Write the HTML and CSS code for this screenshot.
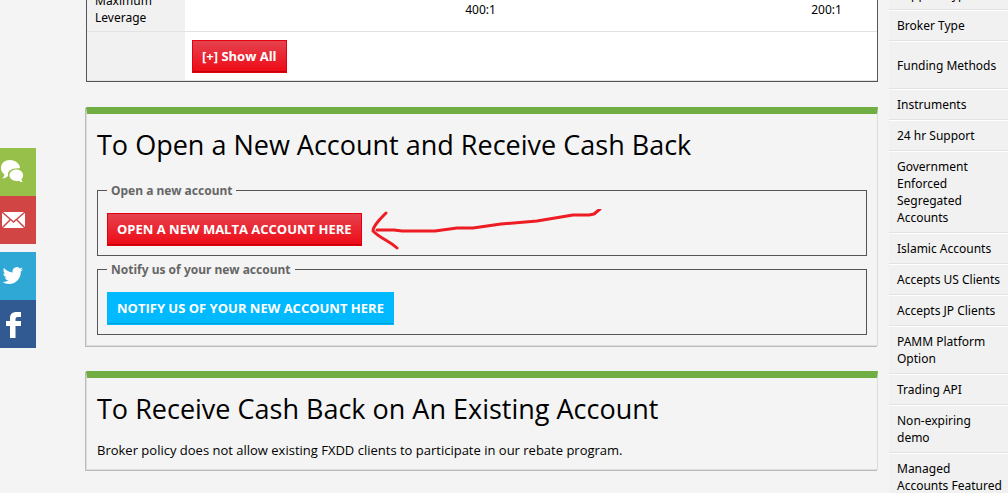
FILE: index.html
```
<!DOCTYPE html>
<html lang="en">
<head>
  <meta charset="UTF-8">
  <meta name="viewport" content="width=device-width, initial-scale=1.0">
  <title>FXDD Cash Back</title>
  <link rel="stylesheet" href="styles.css">
</head>
<body>
  <div class="page">
    <nav class="social">
      <a class="chat" href="#" aria-label="Chat">
        <svg width="24" height="24" viewBox="0 0 24 24"><path fill="#fff" d="M10 0C4.800 0 1 3.400 1 8c0 2.700 1.300 4.900 3.300 6.300.2 1.600-.8 3-2.200 4.200 2.500 0 4.600-.9 6-2.700C7 11 12 7.500 20 8.300 20 3.700 15.500 0 10 0z"/><path fill="#fff" d="M16.500 9.500c-4 0-7 2.500-7 5.800s3 5.700 7 5.700c.8 0 1.500-.1 2.200-.3 1.100 1 2.500 1.500 4.300 1.300-1-.7-1.500-1.700-1.500-2.800 1-1 1.600-2.300 1.600-3.900 0-3.300-2.900-5.800-6.600-5.800z"/></svg>
      </a>
      <a class="mail" href="#" aria-label="Email">
        <svg width="26" height="24" viewBox="0 0 26 24"><path fill="#fff" d="M2 4h23v16H2z"/><path fill="none" stroke="#d14545" stroke-width="1.500" d="M2 4l11.500 10L25 4M2 20l8.500-8.500M25 20l-8.500-8.500"/></svg>
      </a>
      <a class="twitter" href="#" aria-label="Twitter">
        <svg width="24" height="24" viewBox="0 0 24 24"><path fill="#fff" d="M23 5.200c-.7.300-1.500.6-2.400.7.900-.5 1.500-1.300 1.800-2.300-.8.500-1.700.8-2.600 1A4.200 4.200 0 0 0 12.600 8.400C9.200 8.200 6.100 6.600 4 4.100c-1.100 1.900-.6 4.300 1.300 5.600-.7 0-1.300-.2-1.900-.5 0 2 1.400 3.700 3.300 4.100-.6.200-1.200.2-1.900.1.500 1.600 2 2.800 3.900 2.900A8.400 8.400 0 0 1 2.500 18c1.900 1.200 4.100 1.900 6.400 1.900 7.800 0 12.200-6.600 11.900-12.500.9-.6 1.600-1.300 2.200-2.200z"/></svg>
      </a>
      <a class="facebook" href="#" aria-label="Facebook">
        <svg width="24" height="28" viewBox="0 0 24 28"><path fill="#fff" d="M10 28V16H6v-5h4V8C10 4 12.500 2 16.500 2H21v5h-3c-1.600 0-2.500.7-2.500 2.200V11H21v5h-5.500v12z"/></svg>
      </a>
    </nav>

    <main class="content">
      <table class="details">
        <tr>
          <th scope="row">Maximum Leverage</th>
          <td>400:1</td>
          <td class="narrow">200:1</td>
        </tr>
        <tr>
          <th></th>
          <td class="show" colspan="2"><button type="button" class="btn red">[+] Show All</button></td>
        </tr>
      </table>

      <section class="panel">
        <h2>To Open a New Account and Receive Cash Back</h2>
        <fieldset>
          <legend>Open a new account</legend>
          <a class="btn red" href="#">OPEN A NEW MALTA ACCOUNT HERE</a>
          <!-- hand drawn arrow pointing at the button -->
          <svg class="arrow" width="240" height="50" viewBox="0 0 240 50"><path d="M9 21h17l8 1h33l22-3h16l28-4 36-3 36-6h16l5-1 6-5M18 4C12 10 5 17 5 22c8 8 15 9 24 17"/></svg>
        </fieldset>
        <fieldset>
          <legend>Notify us of your new account</legend>
          <a class="btn blue" href="#">NOTIFY US OF YOUR NEW ACCOUNT HERE</a>
        </fieldset>
      </section>

      <section class="panel">
        <h2>To Receive Cash Back on An Existing Account</h2>
        <p>Broker policy does not allow existing FXDD clients to participate in our rebate program.</p>
      </section>
    </main>

    <ul class="features">
      <li>Support Type</li>
      <li>Broker Type</li>
      <li class="tall">Funding Methods</li>
      <li>Instruments</li>
      <li>24 hr Support</li>
      <li>Government Enforced Segregated Accounts</li>
      <li>Islamic Accounts</li>
      <li>Accepts US Clients</li>
      <li>Accepts JP Clients</li>
      <li>PAMM Platform Option</li>
      <li>Trading API</li>
      <li>Non-expiring demo</li>
      <li>Managed Accounts Featured</li>
    </ul>
  </div>
</body>
</html>
```
FILE: styles.css
```
* {
  box-sizing: border-box;
}
body {
  margin: 0;
  height: 100vh;
  overflow: hidden;
  background: #f4f4f4;
  color: #000;
  font-family: "Noto Sans", "Open Sans", sans-serif;
  font-size: 12px;
  line-height: 17px;
}
/* the page is scrolled a little way down */
.page {
  display: grid;
  grid-template-columns: 36px 1fr 119px;
  margin-top: -22px;
}
.social {
  padding-top: 170px;
}
.social a {
  display: flex;
  align-items: center;
  height: 48px;
}
.social .chat {
  background: #97c04a;
}
.social .mail {
  background: #d14545;
  margin-bottom: 8px;
}
.social .twitter {
  background: #2fa8d5;
}
.social .facebook {
  background: #315a92;
}
.content {
  padding: 0 11px 0 50px;
}
.details {
  width: 100%;
  background: #fff;
  border: 1px solid #555;
  border-spacing: 0;
}
.details th,
.details td {
  border-bottom: 1px solid #e2e2e2;
}
.details th {
  width: 98px;
  padding: 13px 8px 5px;
  background: #f1f1f1;
  font-weight: normal;
  text-align: left;
}
.details td {
  padding: 13px 8px 5px;
  text-align: center;
}
.details .narrow {
  width: 101px;
}
.details .show {
  padding: 8px 7px 7px;
  text-align: left;
}
.btn {
  display: inline-block;
  padding: 7px 9px;
  border: 1px solid;
  color: #fff;
  font: bold 13px/17px "Open Sans", sans-serif;
  text-decoration: none;
  vertical-align: top;
  cursor: pointer;
}
.red {
  background: linear-gradient(#e5424e, #ee0a15);
  border-color: #e2000f;
  box-shadow: inset 0 -1px 0 #c4000d;
}
.blue {
  background: #00b9ff;
  border-color: #00b9ff;
  box-shadow: inset 0 -1px 0 #00a0dd;
}
.panel {
  margin-top: 25px;
  padding: 11px 10px 10px;
  border: 1px solid #ddd;
  border-top: 7px solid #70ae43;
  box-shadow: -1px 1px 0 #bbb;
}
h2 {
  margin: 0 0 13px;
  font: 400 27px/40px "Open Sans", sans-serif;
}
fieldset {
  position: relative;
  margin: 17px 0 0;
  padding: 14px 9px 9px;
  border: 1px solid #555;
}
fieldset + fieldset {
  margin-top: 5px;
}
legend {
  padding: 0 4px;
  color: #666;
  font-weight: bold;
}
.arrow {
  position: absolute;
  left: 270px;
  top: 10px;
  fill: none;
  stroke: #ee1c24;
  stroke-width: 3;
  stroke-linecap: round;
  stroke-linejoin: round;
}
.panel p {
  margin: 0;
  font: 13px/17px "Open Sans", sans-serif;
}
.features {
  margin: 0;
  padding: 1px 0 0;
  list-style: none;
}
.features li {
  padding: 6px 5px 6px 8px;
  background: #f1f1f1;
  border-top: 1px solid #fff;
  border-bottom: 1px solid #e2e2e2;
}
.features .tall {
  display: flex;
  align-items: center;
  min-height: 48px;
}
```
